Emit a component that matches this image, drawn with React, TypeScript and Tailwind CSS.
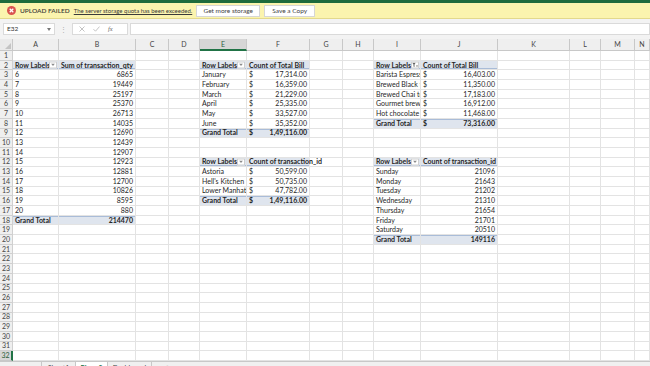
import React from "react";

type Cell = {
  t?: string;
  v?: string;
  dollar?: boolean;
  right?: boolean;
  bold?: boolean;
  kind?: "hdr" | "tot";
  dd?: "arrow" | "filter";
  overflow?: boolean;
};

const COLS = ["A", "B", "C", "D", "E", "F", "G", "H", "I", "J", "K", "L", "M", "N"];

function buildData(): Record<string, Cell> {
  const d: Record<string, Cell> = {};
  d["A2"] = { t: "Row Labels", bold: true, kind: "hdr", dd: "arrow" };
  d["B2"] = { t: "Sum of transaction_qty", bold: true, kind: "hdr" };
  const t1: [string, string][] = [
    ["6", "6865"], ["7", "19449"], ["8", "25197"], ["9", "25370"], ["10", "26713"],
    ["11", "14035"], ["12", "12690"], ["13", "12439"], ["14", "12907"], ["15", "12923"],
    ["16", "12881"], ["17", "12700"], ["18", "10826"], ["19", "8595"], ["20", "880"],
  ];
  t1.forEach(([a, b], i) => {
    d["A" + (3 + i)] = { t: a };
    d["B" + (3 + i)] = { t: b, right: true };
  });
  d["A18"] = { t: "Grand Total", bold: true, kind: "tot" };
  d["B18"] = { t: "214470", bold: true, right: true, kind: "tot" };

  d["E2"] = { t: "Row Labels", bold: true, kind: "hdr", dd: "arrow" };
  d["F2"] = { t: "Count of Total Bill", bold: true, kind: "hdr" };
  const t2: [string, string][] = [
    ["January", "17,314.00"], ["February", "16,359.00"], ["March", "21,229.00"],
    ["April", "25,335.00"], ["May", "33,527.00"], ["June", "35,352.00"],
  ];
  t2.forEach(([a, b], i) => {
    d["E" + (3 + i)] = { t: a };
    d["F" + (3 + i)] = { v: b, dollar: true };
  });
  d["E9"] = { t: "Grand Total", bold: true, kind: "tot" };
  d["F9"] = { v: "1,49,116.00", dollar: true, bold: true, kind: "tot" };

  d["E12"] = { t: "Row Labels", bold: true, kind: "hdr", dd: "arrow" };
  d["F12"] = { t: "Count of transaction_id", bold: true, kind: "hdr", overflow: true };
  const t3: [string, string][] = [
    ["Astoria", "50,599.00"], ["Hell's Kitchen", "50,735.00"], ["Lower Manhattan", "47,782.00"],
  ];
  t3.forEach(([a, b], i) => {
    d["E" + (13 + i)] = { t: a };
    d["F" + (13 + i)] = { v: b, dollar: true };
  });
  d["E16"] = { t: "Grand Total", bold: true, kind: "tot" };
  d["F16"] = { v: "1,49,116.00", dollar: true, bold: true, kind: "tot" };

  d["I2"] = { t: "Row Labels", bold: true, kind: "hdr", dd: "filter" };
  d["J2"] = { t: "Count of Total Bill", bold: true, kind: "hdr" };
  const t4: [string, string][] = [
    ["Barista Espresso", "16,403.00"], ["Brewed Black tea", "11,350.00"],
    ["Brewed Chai tea", "17,183.00"], ["Gourmet brewed coffee", "16,912.00"],
    ["Hot chocolate", "11,468.00"],
  ];
  t4.forEach(([a, b], i) => {
    d["I" + (3 + i)] = { t: a };
    d["J" + (3 + i)] = { v: b, dollar: true };
  });
  d["I8"] = { t: "Grand Total", bold: true, kind: "tot" };
  d["J8"] = { v: "73,316.00", dollar: true, bold: true, kind: "tot" };

  d["I12"] = { t: "Row Labels", bold: true, kind: "hdr", dd: "arrow" };
  d["J12"] = { t: "Count of transaction_id", bold: true, kind: "hdr" };
  const t5: [string, string][] = [
    ["Sunday", "21096"], ["Monday", "21643"], ["Tuesday", "21202"], ["Wednesday", "21310"],
    ["Thursday", "21654"], ["Friday", "21701"], ["Saturday", "20510"],
  ];
  t5.forEach(([a, b], i) => {
    d["I" + (13 + i)] = { t: a };
    d["J" + (13 + i)] = { t: b, right: true };
  });
  d["I20"] = { t: "Grand Total", bold: true, kind: "tot" };
  d["J20"] = { t: "149116", bold: true, right: true, kind: "tot" };
  return d;
}

const DATA = buildData();

function DropBtn({ kind }: { kind: "arrow" | "filter" }) {
  return (
    <span className="absolute right-[1px] top-1/2 flex h-[7px] w-[8px] -translate-y-1/2 items-center justify-center border border-[#cfcfcf] bg-white">
      {kind === "arrow" ? (
        <svg width="4" height="2.5" viewBox="0 0 4 2.5">
          <path d="M0 0 L4 0 L2 2.5 Z" fill="#8a8a8a" />
        </svg>
      ) : (
        <svg width="6" height="5" viewBox="0 0 6 5">
          <path d="M0.3 0.3 L3.7 0.3 L2.5 2 L2.5 4.5 L1.5 4 L1.5 2 Z" fill="#666" />
          <path d="M4 3 L6 3 L5 4.4 Z" fill="#666" />
        </svg>
      )}
    </span>
  );
}

function SheetCell({ addr }: { addr: string }) {
  const c = DATA[addr];
  const selected = addr === "E32";
  let bg = "bg-white";
  let extra = "";
  if (c?.kind === "hdr") {
    bg = "bg-[#dfe5ee]";
    extra = "shadow-[inset_0_-1px_0_#a9bcd8]";
  } else if (c?.kind === "tot") {
    bg = "bg-[#dfe5ee]";
    extra = "shadow-[inset_0_1px_0_#a9bcd8]";
  }
  return (
    <div
      className={`relative flex items-center border-b border-r border-[#e3e3e3] pl-[2px] pr-[2px] text-[7px] leading-none text-[#262626] ${bg} ${extra} ${
        c?.overflow ? "z-10 overflow-visible" : "overflow-hidden"
      } ${c?.bold ? "font-bold" : ""}`}
    >
      {c?.t !== undefined && (
        <span className={`whitespace-nowrap ${c.right ? "ml-auto" : ""}`}>{c.t}</span>
      )}
      {c?.dollar && (
        <>
          <span className="whitespace-nowrap">$</span>
          <span className="ml-auto whitespace-nowrap">{c.v}</span>
        </>
      )}
      {c?.dd && <DropBtn kind={c.dd} />}
      {selected && (
        <span className="pointer-events-none absolute inset-[-1px] border-[1.5px] border-[#217346]" />
      )}
    </div>
  );
}

export default function App() {
  const rows = Array.from({ length: 32 }, (_, i) => i + 1);
  return (
    <div
      className="flex h-[366px] w-[650px] flex-col overflow-hidden bg-white"
      style={{ fontFamily: "Lato, 'Open Sans', sans-serif" }}
    >
      <div className="h-[3px] shrink-0 bg-[#1e6b3c]" />
      <div className="flex h-[16px] shrink-0 items-center border-b border-[#e3d98c] bg-[#fbf4ae] pl-[7px] text-[6.5px] text-[#333]">
        <svg width="9" height="9" viewBox="0 0 10 10" className="shrink-0">
          <circle cx="5" cy="5" r="5" fill="#d9534f" />
          <path d="M3 3 L7 7 M7 3 L3 7" stroke="white" strokeWidth="1.4" />
        </svg>
        <span className="ml-[4px] font-semibold text-[#3a3a3a]">UPLOAD FAILED</span>
        <span className="ml-[4px] text-[6px] text-[#3a3a3a] underline">
          The server storage quota has been exceeded.
        </span>
        <span className="ml-[4px] flex h-[12px] w-[64px] items-center justify-center border border-[#d6d6d6] bg-white text-[#444]">
          Get more storage
        </span>
        <span className="ml-[4px] flex h-[12px] w-[51px] items-center justify-center border border-[#d6d6d6] bg-white text-[#444]">
          Save a Copy
        </span>
      </div>
      <div className="flex h-[20px] shrink-0 items-center bg-[#f3f3f3] pl-[3px] text-[6.5px] text-[#333]">
        <div className="flex h-[12px] w-[52px] items-center border border-[#dadada] bg-white pl-[3px]">
          <span>E32</span>
          <svg width="4" height="3" viewBox="0 0 4 3" className="ml-auto mr-[3px]">
            <path d="M0 0 L4 0 L2 3 Z" fill="#777" />
          </svg>
        </div>
        <span className="ml-[5px] text-[7px] leading-none text-[#aaa]">⋮</span>
        <div className="ml-[5px] flex h-[12px] w-[56px] items-center gap-[8px] border border-[#dadada] bg-white pl-[6px] text-[#b0b0b0]">
          <svg width="6" height="6" viewBox="0 0 6 6">
            <path d="M0.5 0.5 L5.5 5.5 M5.5 0.5 L0.5 5.5" stroke="#b4b4b4" strokeWidth="0.8" />
          </svg>
          <svg width="7" height="6" viewBox="0 0 7 6">
            <path d="M0.5 3.2 L2.5 5.2 L6.5 0.6" stroke="#b4b4b4" strokeWidth="0.8" fill="none" />
          </svg>
          <span className="italic text-[#666]" style={{ fontFamily: "'Liberation Serif', serif" }}>
            fx
          </span>
        </div>
        <div className="ml-[2px] h-[12px] flex-1 border border-[#dadada] bg-white" />
      </div>
      <div className="grid shrink-0 grid-cols-[13px_46px_77px_33px_31px_47px_63px_33px_31px_47px_77px_72px_31px_34px_1fr] grid-rows-[12px_repeat(32,9.7px)]">
        <div className="relative border-b border-r border-[#c8c8c8] bg-[#eaeaea]">
          <svg width="6" height="6" viewBox="0 0 6 6" className="absolute bottom-[1px] right-[1px]">
            <path d="M6 0 L6 6 L0 6 Z" fill="#c4c4c4" />
          </svg>
        </div>
        {COLS.map((c) => (
          <div
            key={c}
            className={`flex items-center justify-center border-r text-[7px] leading-none ${
              c === "E"
                ? "border-b-2 border-b-[#217346] border-r-[#c8c8c8] bg-[#d6d6d6] text-[#2b5f3d]"
                : "border-b border-[#c8c8c8] bg-[#efefef] text-[#444]"
            }`}
          >
            {c}
          </div>
        ))}
        {rows.map((r) => (
          <React.Fragment key={r}>
            <div
              className={`flex items-center justify-center border-b text-[7px] leading-none ${
                r === 32
                  ? "border-r-2 border-b-[#c8c8c8] border-r-[#217346] bg-[#d6d6d6] text-[#2b5f3d]"
                  : "border-r border-[#d0d0d0] bg-[#efefef] text-[#444]"
              }`}
            >
              {r}
            </div>
            {COLS.map((c) => (
              <SheetCell key={c + r} addr={c + r} />
            ))}
          </React.Fragment>
        ))}
      </div>
      <div className="flex h-[20px] shrink-0 items-start border-t border-[#c8c8c8] bg-[#f0f0f0] pl-[41px] text-[7px] leading-none text-[#444]">
        <div className="flex h-[10px] w-[35px] items-end justify-center border-x border-[#c8c8c8]">Sheet1</div>
        <div className="flex h-[10px] w-[31px] items-end justify-center bg-white font-bold text-[#217346]">
          Pivot 2
        </div>
        <div className="flex h-[10px] w-[45px] items-end justify-center border-x border-[#c8c8c8]">Dashboard</div>
        <div className="ml-[12px] flex h-[10px] items-end text-[8px] text-[#777]">⊕</div>
      </div>
    </div>
  );
}
